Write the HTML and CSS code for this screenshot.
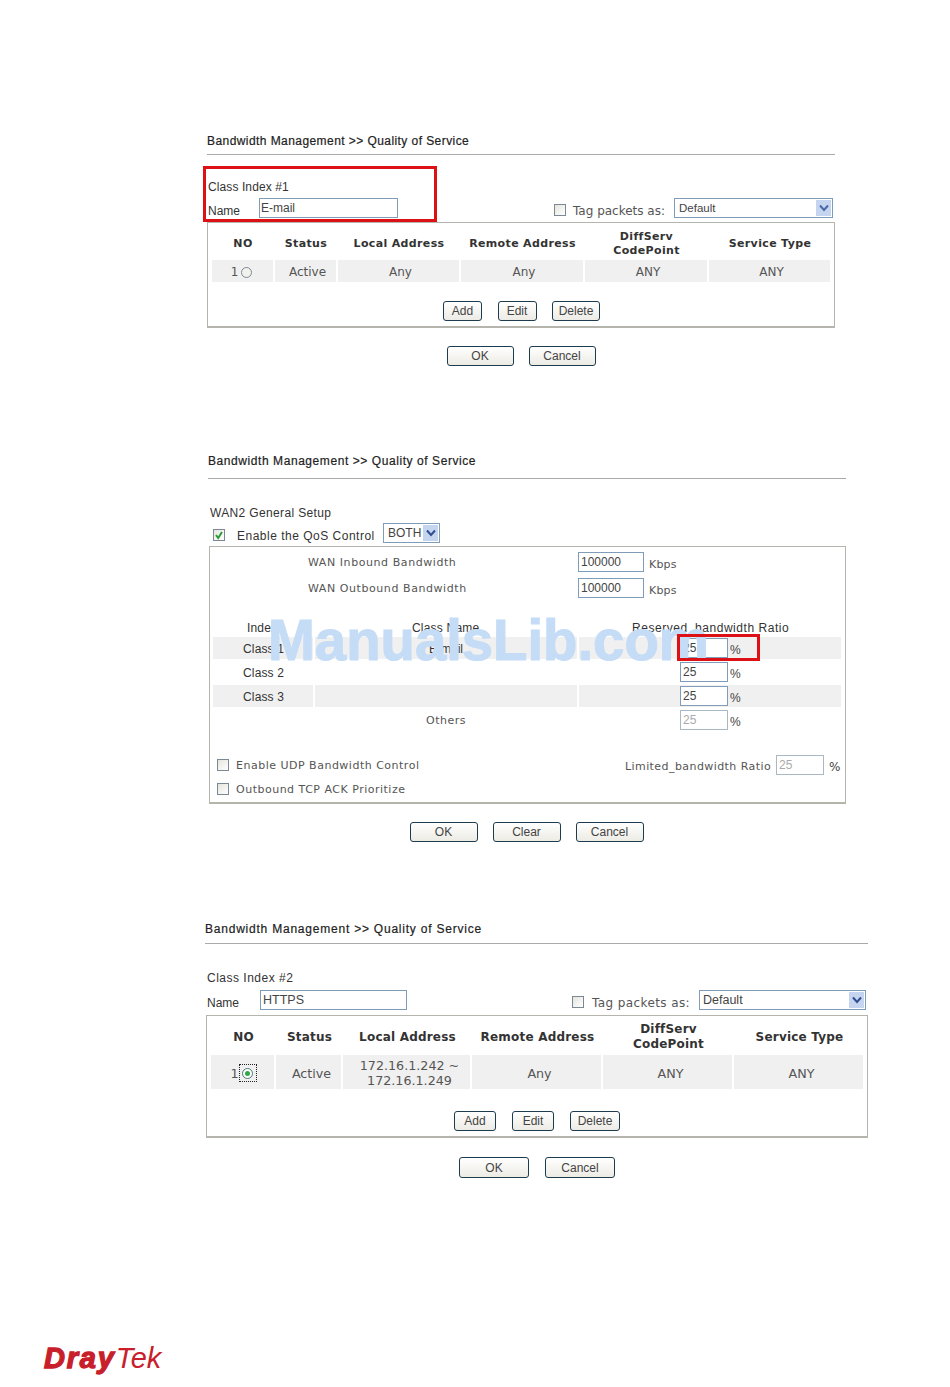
FILE: index.html
```html
<!DOCTYPE html>
<html lang="en">
<head>
<meta charset="utf-8">
<title>Bandwidth Management</title>
<link rel="stylesheet" href="styles.css">
</head>
<body>
<main class="sheet">

<section class="panel panel-a">
  <div class="title">Bandwidth Management &gt;&gt; Quality of Service</div>
  <div class="class-label">Class Index #1</div>
  <div class="name-row">
    <span class="name-label">Name</span>
    <input class="field name-field" value="E-mail">
    <span class="box-check tag-check"></span>
    <span class="tag-label">Tag packets as:</span>
    <div class="select tag-select"><span>Default</span><span class="arrow"><svg viewBox="0 0 10 8" width="10" height="8"><path d="M1 1.5 5 6 9 1.5" fill="none" stroke="#4a6aa8" stroke-width="2"/></svg></span></div>
  </div>
  <div class="frame">
    <div class="rule-table">
      <div class="th">NO</div><div class="th">Status</div><div class="th">Local Address</div><div class="th">Remote Address</div><div class="th">DiffServ<br>CodePoint</div><div class="th">Service Type</div>
      <div class="td no-cell">1<span class="radio"></span></div><div class="td">Active</div><div class="td">Any</div><div class="td">Any</div><div class="td">ANY</div><div class="td">ANY</div>
    </div>
    <div class="actions">
      <button class="btn btn-sm">Add</button><button class="btn btn-sm">Edit</button><button class="btn btn-del">Delete</button>
    </div>
  </div>
  <div class="footer-btns">
    <button class="btn btn-lg">OK</button><button class="btn btn-lg">Cancel</button>
  </div>
  <div class="red red-a"></div>
</section>

<section class="panel panel-b">
  <div class="title">Bandwidth Management &gt;&gt; Quality of Service</div>
  <div class="class-label">WAN2 General Setup</div>
  <div class="enable-row">
    <span class="box-check is-checked"><svg viewBox="0 0 10 10" width="10" height="10"><path d="M2 5 4.2 8 8 2" fill="none" stroke="#2f9a3a" stroke-width="2"/></svg></span>
    <span class="enable-label">Enable the QoS Control</span>
    <div class="select both-select"><span>BOTH</span><span class="arrow"><svg viewBox="0 0 10 8" width="10" height="8"><path d="M1 1.5 5 6 9 1.5" fill="none" stroke="#2f4f8f" stroke-width="2"/></svg></span></div>
  </div>
  <div class="frame frame-b">
    <div class="bw-row"><span class="bw-label">WAN Inbound Bandwidth</span><input class="field bw-field" value="100000"><span class="unit">Kbps</span></div>
    <div class="bw-row"><span class="bw-label">WAN Outbound Bandwidth</span><input class="field bw-field" value="100000"><span class="unit">Kbps</span></div>
    <div class="ratio-table">
      <div class="rh rh-1">Index</div><div class="rh rh-2">Class Name</div><div class="rh rh-3">Reserved_bandwidth Ratio</div>
      <div class="rc rc-1 shade">Class 1</div><div class="rc rc-2 shade rc-mail">E-mail</div><div class="rc rc-3 shade"><input class="field pct-field" value="25"><span class="pct">%</span></div>
      <div class="rc rc-1">Class 2</div><div class="rc rc-2"></div><div class="rc rc-3"><input class="field pct-field" value="25"><span class="pct">%</span></div>
      <div class="rc rc-1 shade">Class 3</div><div class="rc rc-2 shade"></div><div class="rc rc-3 shade"><input class="field pct-field" value="25"><span class="pct">%</span></div>
      <div class="rc"></div><div class="rc rc-2 others">Others</div><div class="rc rc-3"><input class="field pct-field is-off" value="25"><span class="pct">%</span></div>
    </div>
    <div class="opt-row opt-first">
      <span class="box-check"></span><span class="opt-label">Enable UDP Bandwidth Control</span>
      <span class="limit"><span class="opt-label limit-label">Limited_bandwidth Ratio</span><input class="field pct-field is-off" value="25"><span class="pct pct-limit">%</span></span>
    </div>
    <div class="opt-row">
      <span class="box-check"></span><span class="opt-label">Outbound TCP ACK Prioritize</span>
    </div>
  </div>
  <div class="footer-btns">
    <button class="btn btn-lg">OK</button><button class="btn btn-lg">Clear</button><button class="btn btn-lg">Cancel</button>
  </div>
  <div class="watermark">ManualsLib.com</div>
  <div class="red red-b"></div>
</section>

<section class="panel panel-c">
  <div class="title">Bandwidth Management &gt;&gt; Quality of Service</div>
  <div class="class-label">Class Index #2</div>
  <div class="name-row">
    <span class="name-label">Name</span>
    <input class="field name-field" value="HTTPS">
    <span class="box-check tag-check"></span>
    <span class="tag-label">Tag packets as:</span>
    <div class="select tag-select"><span>Default</span><span class="arrow"><svg viewBox="0 0 10 8" width="10" height="8"><path d="M1 1.5 5 6 9 1.5" fill="none" stroke="#2f4f8f" stroke-width="2"/></svg></span></div>
  </div>
  <div class="frame">
    <div class="rule-table">
      <div class="th">NO</div><div class="th">Status</div><div class="th">Local Address</div><div class="th">Remote Address</div><div class="th">DiffServ<br>CodePoint</div><div class="th">Service Type</div>
      <div class="td no-cell">1<span class="focus"><span class="radio is-on"></span></span></div><div class="td">Active</div><div class="td">172.16.1.242 ~<br>172.16.1.249</div><div class="td">Any</div><div class="td">ANY</div><div class="td">ANY</div>
    </div>
    <div class="actions">
      <button class="btn btn-sm">Add</button><button class="btn btn-sm">Edit</button><button class="btn btn-del">Delete</button>
    </div>
  </div>
  <div class="footer-btns">
    <button class="btn btn-lg">OK</button><button class="btn btn-lg">Cancel</button>
  </div>
</section>

<footer class="logo"><span class="logo-dray">Dray</span><span class="logo-tek">Tek</span></footer>

</main>
</body>
</html>
```
FILE: styles.css
```css
* { box-sizing: border-box; }
html, body { margin: 0; padding: 0; background: #fff; }
body { font-family: "Liberation Sans", Arial, sans-serif; color: #333; }
.sheet { width: 950px; height: 1387px; overflow: hidden; padding-top: 131px; }

.panel { position: relative; font-size: 12px; }
.panel-a { margin-left: 207px; width: 628px; }
.panel-b { margin-left: 209px; width: 637px; margin-top: 85px; }
.panel-c { margin-left: 206px; width: 662px; margin-top: 77px; }

.title {
  height: 24px; line-height: 20px; border-bottom: 1px solid #aaa;
  font-size: 12px; letter-spacing: .43px; color: #222; -webkit-text-stroke: .2px #222;
}
.panel-b .title { height: 28px; letter-spacing: .57px; margin-left: -1px; }
.panel-c .title { height: 25px; letter-spacing: .78px; margin-left: -1px; }

.class-label { height: 16px; line-height: 18px; margin-top: 23px; margin-left: 1px; letter-spacing: .1px; }
.panel-b .class-label { margin-top: 25px; letter-spacing: .35px; }
.panel-c .class-label { margin-top: 25px; letter-spacing: .5px; }

.name-row { display: flex; align-items: center; height: 20px; margin-top: 4px; }
.panel-c .name-row { margin-top: 5px; }
.name-label { width: 52px; padding-left: 1px; padding-top: 6px; font-size: 12px; }
.panel-c .name-label { width: 54px; }

.field {
  display: block; height: 20px; margin: 0; padding: 0 2px;
  border: 1px solid #7f9db9; background: #fff; color: #444;
  font: 12px "Liberation Sans", Arial, sans-serif; outline: none;
}
.name-field { width: 139px; margin-right: 156px; padding-left: 1px; }
.panel-c .name-field { width: 147px; margin-right: 165px; padding-left: 2px; font-size: 12.5px; }

.box-check {
  display: inline-flex; align-items: center; justify-content: center; flex: none;
  width: 12px; height: 12px; border: 1px solid #7c8894;
  background: linear-gradient(135deg, #e4e4de, #fff);
}
.tag-check { margin-top: 3px; }
.tag-label {
  width: 108px; padding-left: 7px; padding-top: 6px; white-space: nowrap;
  font: 12px "DejaVu Sans", Verdana, sans-serif; color: #555;
}
.panel-c .tag-label { width: 115px; padding-left: 8px; letter-spacing: .4px; }

.select {
  display: flex; align-items: center; justify-content: space-between; height: 20px;
  border: 1px solid #7f9db9; padding: 1px 1px 1px 4px; background: #fff; color: #444;
}
.tag-select { width: 159px; font-size: 11.5px; }
.panel-c .tag-select { width: 167px; padding-left: 3px; font-size: 12.5px; }
.arrow {
  display: flex; align-items: center; justify-content: center;
  width: 15px; height: 100%; background: #c5d4ef;
}

.frame { height: 106px; margin-top: 4px; border: 1px solid #b5b5ad; border-bottom-width: 2px; padding: 5px 4px 0; }
.panel-c .frame { height: 123px; margin-top: 5px; }

.rule-table {
  display: grid; gap: 2px;
  grid-template-columns: 61px 61px 121px 122px 122px 121px;
  grid-template-rows: 30px 22px;
  font-family: "DejaVu Sans", Verdana, sans-serif; font-size: 11px; text-align: center;
}
.panel-c .rule-table {
  grid-template-columns: 63px 65px 127px 129px 129px 129px;
  grid-template-rows: 32px 34px;
  font-size: 12px;
}
.th { display: flex; align-items: center; justify-content: center; padding-top: 2px; padding-left: 1px; font-weight: 700; line-height: 14px; letter-spacing: .35px; color: #333; }
.panel-c .th { padding-left: 2px; padding-top: 0; line-height: 15px; letter-spacing: .2px; }
.td { display: flex; align-items: center; justify-content: center; padding-top: 2px; padding-left: 4px; font-size: 12px; background: #f0f0f0; color: #555; line-height: 14px; }
.panel-c .td { padding-left: 6px; font-size: 12.7px; line-height: 15px; }
.no-cell { gap: 3px; padding-left: 0; }
.panel-a .no-cell { padding-right: 2px; }
.panel-c .no-cell { padding-left: 2px; gap: 2px; }
.radio {
  display: inline-block; width: 11px; height: 11px; border-radius: 50%;
  border: 1px solid #7c8894; background: #f2f2ec;
}
.radio.is-on { display: flex; align-items: center; justify-content: center; background: #fff; border-color: #4a7a70; }
.radio.is-on::after { content: ""; width: 5px; height: 5px; border-radius: 50%; background: #2fa84a; }
.focus { display: flex; align-items: center; justify-content: center; width: 18px; height: 18px; margin-left: -2px; border: 1px dotted #222; }

.actions { display: flex; justify-content: center; gap: 15.5px; margin-top: 19px; padding-left: 1px; }
.panel-c .actions { gap: 16px; margin-top: 22px; padding-left: 0; }

.btn {
  display: block; height: 20px; margin: 0; padding: 0;
  border: 1px solid #1d3c50; border-radius: 3px;
  background: linear-gradient(#fff, #ecebe4);
  color: #444; font: 12px "Liberation Sans", Arial, sans-serif;
}
.btn-sm { width: 39px; }
.btn-del { width: 48px; }
.panel-c .btn-sm { width: 42px; }
.panel-c .btn-del { width: 50px; }
.btn-lg { width: 67px; }
.panel-b .btn-lg { width: 68px; }
.panel-c .btn-lg { width: 70px; height: 21px; }
.panel-c .actions .btn { height: 20px; }

.footer-btns { display: flex; justify-content: center; gap: 15px; margin-top: 18px; }
.panel-b .footer-btns { padding-right: 2px; }
.panel-c .footer-btns { gap: 16px; margin-top: 19px; }

.enable-row { display: flex; align-items: center; height: 20px; margin-top: 3px; padding-left: 4px; }
.enable-row .box-check { margin-top: 4px; }
.enable-label { width: 158px; padding-left: 12px; padding-top: 6px; white-space: nowrap; letter-spacing: .5px; }
.both-select { width: 57px; font-size: 12px; }

.frame-b { height: 258px; margin-top: 3px; padding: 5px 4px 0 0; }
.bw-row { display: flex; align-items: center; height: 20px; margin-bottom: 6px; padding-left: 98px; font-family: "DejaVu Sans", Verdana, sans-serif; font-size: 11px; color: #555; }
.bw-label { width: 270px; white-space: nowrap; letter-spacing: .57px; }
.bw-field { width: 66px; }
.unit { padding-left: 5px; padding-top: 4px; letter-spacing: .2px; }

.ratio-table {
  display: grid; gap: 2px; margin-left: 3px; margin-top: 22px;
  grid-template-columns: 100px 262px 262px;
  grid-template-rows: 15px 22px 22px 22px 22px;
  color: #333;
}
.rh { height: 16px; line-height: 16px; white-space: nowrap; margin-bottom: -1px; letter-spacing: .15px; }
.rh-1 { padding-left: 34px; }
.rh-2 { padding-left: 97px; letter-spacing: .2px; }
.rh-3 { padding-left: 53px; letter-spacing: .55px; }
.rc { display: flex; align-items: center; }
.rc-1 { padding-left: 30px; padding-top: 2px; letter-spacing: .15px; }
.rc-2 { justify-content: center; padding-top: 2px; }
.rc-3 { padding-left: 101px; }
.shade { background: #f0f0f0; }
.others { padding-top: 0; font: 11px "DejaVu Sans", Verdana, sans-serif; letter-spacing: .5px; color: #555; }
.pct-field { width: 48px; }
.is-off { color: #aaa; border-color: #aab8c4; }
.pct { padding-left: 2px; padding-top: 4px; font-size: 12px; color: #444; }

.opt-row { display: flex; align-items: center; height: 20px; margin-top: 4px; padding-left: 7px; font: 11px "DejaVu Sans", Verdana, sans-serif; color: #555; letter-spacing: .5px; }
.opt-first { margin-top: 24px; }
.opt-row .box-check { margin-right: 7px; }
.limit { display: flex; align-items: center; margin-left: auto; gap: 5px; }
.limit-label { letter-spacing: .43px; padding-top: 2px; }
.pct-limit { padding-left: 0; }

.red { position: absolute; border: 3px solid #dd1016; }
.red-a { left: -4px; top: 35px; width: 234px; height: 56px; }
.red-b { left: 468px; top: 183px; width: 83px; height: 27px; }
.watermark {
  position: absolute; left: 59px; top: 157px; white-space: nowrap;
  font: 700 58px/64px "Liberation Sans", Arial, sans-serif; color: #c5dcf6; -webkit-text-stroke: 1.2px #c5dcf6;
  transform: scaleX(.97); transform-origin: left center;
}

.logo { margin-left: 44px; margin-top: 162px; height: 36px; line-height: 36px; white-space: nowrap; color: #c8202a; font-style: italic; }
.logo-dray { font-size: 29px; font-weight: 700; letter-spacing: 1.8px; -webkit-text-stroke: 1.3px #c8202a; }
.logo-tek { font-size: 29px; }
```
